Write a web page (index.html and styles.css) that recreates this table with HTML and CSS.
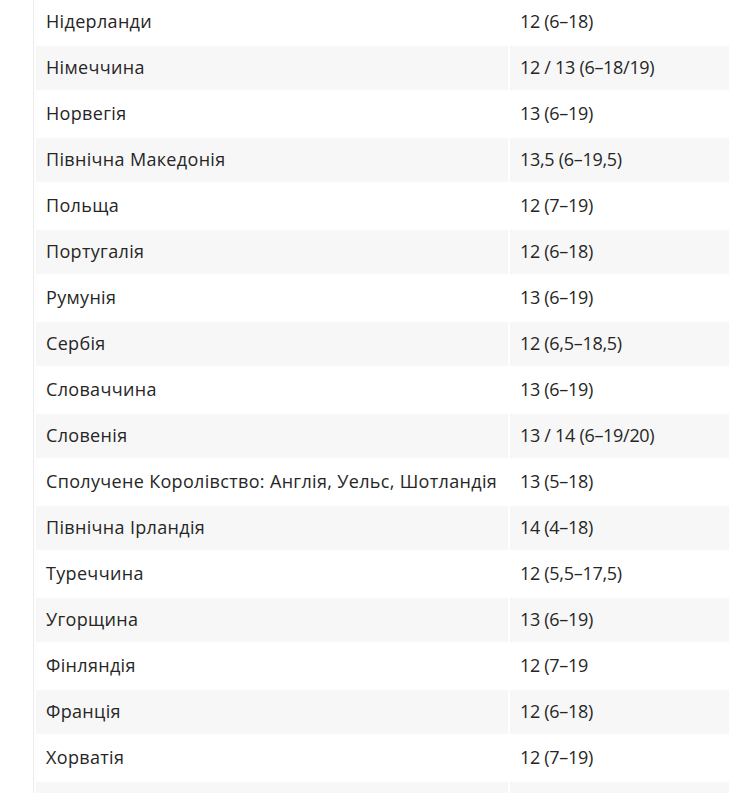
FILE: index.html
```html
<!DOCTYPE html>
<html lang="uk">
<head>
<meta charset="utf-8">
<link rel="stylesheet" href="styles.css">
</head>
<body>
<div class="wrap">
<table class="tbl">
<tbody>
<tr><td>Нідерланди</td><td>12 (6–18)</td></tr>
<tr><td>Німеччина</td><td>12 / 13 (6–18/19)</td></tr>
<tr><td>Норвегія</td><td>13 (6–19)</td></tr>
<tr><td>Північна Македонія</td><td>13,5 (6–19,5)</td></tr>
<tr><td>Польща</td><td>12 (7–19)</td></tr>
<tr><td>Португалія</td><td>12 (6–18)</td></tr>
<tr><td>Румунія</td><td>13 (6–19)</td></tr>
<tr><td>Сербія</td><td>12 (6,5–18,5)</td></tr>
<tr><td>Словаччина</td><td>13 (6–19)</td></tr>
<tr><td>Словенія</td><td>13 / 14 (6–19/20)</td></tr>
<tr><td>Сполучене Королівство: Англія, Уельс, Шотландія</td><td>13 (5–18)</td></tr>
<tr><td>Північна Ірландія</td><td>14 (4–18)</td></tr>
<tr><td>Туреччина</td><td>12 (5,5–17,5)</td></tr>
<tr><td>Угорщина</td><td>13 (6–19)</td></tr>
<tr><td>Фінляндія</td><td>12 (7–19</td></tr>
<tr><td>Франція</td><td>12 (6–18)</td></tr>
<tr><td>Хорватія</td><td>12 (7–19)</td></tr>
<tr><td>&nbsp;</td><td>&nbsp;</td></tr>
</tbody>
</table>
</div>
</body>
</html>
```
FILE: styles.css
```css
html, body {
  margin: 0;
  padding: 0;
  background: #fff;
  overflow: hidden;
}
.wrap {
  margin-left: 33px;
  border-left: 1px solid #ececec;
  margin-top: -2px;
  width: 760px;
}
.tbl {
  border-collapse: separate;
  border-spacing: 2px;
  font-family: "Open Sans", sans-serif;
  font-size: 18px;
  letter-spacing: 0.33px;
  color: #262626;
  width: 760px;
  table-layout: fixed;
}
.tbl td {
  height: 44px;
  padding: 0 10px 2px;
  box-sizing: border-box;
  vertical-align: middle;
  white-space: nowrap;
}
.tbl td:first-child {
  width: 472px;
}
.tbl td:last-child {
  letter-spacing: -0.3px;
}
.tbl tr:nth-child(even) td {
  background: #f7f7f7;
}
```
